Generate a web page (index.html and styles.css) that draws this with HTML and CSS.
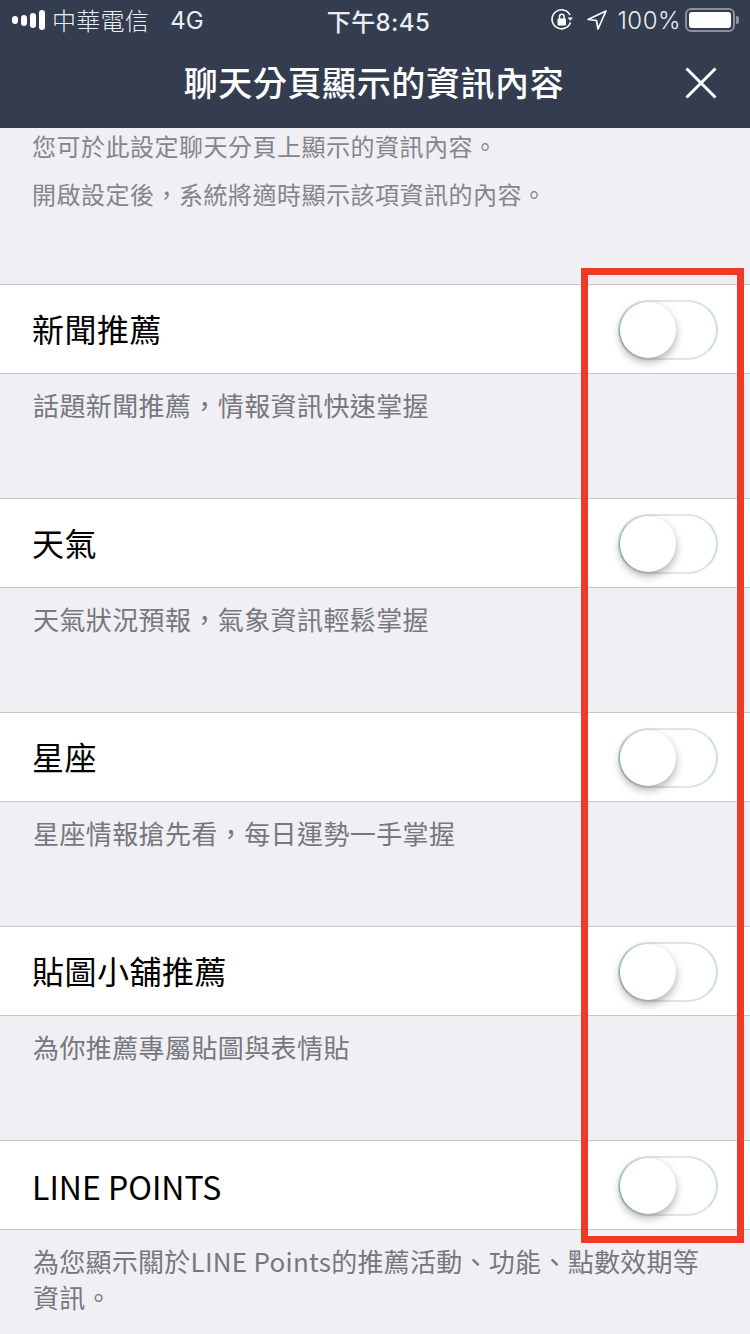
FILE: index.html
```html
<!DOCTYPE html>
<html lang="zh-Hant">
<head>
<meta charset="utf-8">
<title>聊天分頁顯示的資訊內容</title>
<link rel="stylesheet" href="styles.css">
</head>
<body>
<div class="page">
  <header class="top">
    <div class="status">
      <div class="status-left">
        <span class="signal"><i class="b1"></i><i class="b2"></i><i class="b3"></i><i class="b4"></i></span>
        <span class="carrier">中華電信</span>
        <span class="net">4G</span>
      </div>
      <div class="clock">下午8:45</div>
      <div class="status-right">
        <svg class="lock" width="24" height="24" viewBox="0 0 24 24" fill="none">
          <path d="M20.5 14.5A9.5 9.5 0 1 1 20 7" stroke="#fff" stroke-width="1.6"/>
          <path d="M17.5 9.5h5.5l-2.700 3.200z" fill="#fff"/>
          <rect x="7.500" y="10.500" width="8.500" height="7" rx="1" fill="#fff"/>
          <path d="M9.500 11V8.500a2.300 2.300 0 0 1 4.600 0V11" stroke="#fff" stroke-width="1.500"/>
        </svg>
        <svg class="loc" width="22" height="22" viewBox="0 0 22 22" fill="none">
          <path d="M20 2 2 10.500l8.500 1 1.500 8.500z" stroke="#fff" stroke-width="1.700" stroke-linejoin="round"/>
        </svg>
        <span class="pct">100%</span>
        <span class="battery"><span class="fill"></span></span>
        <span class="nub"></span>
      </div>
    </div>
    <div class="nav">
      <h1 class="title">聊天分頁顯示的資訊內容</h1>
      <svg class="close" width="32" height="32" viewBox="0 0 32 32" fill="none">
        <path d="M1.500 1.500 30.500 30.500M30.500 1.500 1.500 30.500" stroke="#fff" stroke-width="3"/>
      </svg>
    </div>
  </header>
  <main class="content">
    <div class="intro">
      <p>您可於此設定聊天分頁上顯示的資訊內容。</p>
      <p>開啟設定後，系統將適時顯示該項資訊的內容。</p>
    </div>
    <section class="item">
      <div class="row"><span class="label">新聞推薦</span><span class="toggle"><span class="knob"></span></span></div>
      <p class="desc">話題新聞推薦，情報資訊快速掌握</p>
    </section>
    <section class="item">
      <div class="row"><span class="label">天氣</span><span class="toggle"><span class="knob"></span></span></div>
      <p class="desc">天氣狀況預報，氣象資訊輕鬆掌握</p>
    </section>
    <section class="item">
      <div class="row"><span class="label">星座</span><span class="toggle"><span class="knob"></span></span></div>
      <p class="desc">星座情報搶先看，每日運勢一手掌握</p>
    </section>
    <section class="item">
      <div class="row"><span class="label">貼圖小舖推薦</span><span class="toggle"><span class="knob"></span></span></div>
      <p class="desc">為你推薦專屬貼圖與表情貼</p>
    </section>
    <section class="item">
      <div class="row"><span class="label latin">LINE POINTS</span><span class="toggle"><span class="knob"></span></span></div>
      <p class="desc desc-long">為您顯示關於LINE Points的推薦活動、功能、點數效期等資訊。</p>
    </section>
  </main>
  <div class="highlight"></div>
</div>
</body>
</html>
```
FILE: styles.css
```css
* { box-sizing: border-box; }
html, body { margin: 0; padding: 0; }
body { font-family: "Noto Sans CJK TC", "Noto Sans", sans-serif; background: #efeff4; }
.page { position: relative; width: 750px; height: 1334px; overflow: hidden; background: #efeff4; }

.top { height: 128px; background: #343c4f; color: #fff; }
.status { display: grid; grid-template-columns: 1fr auto 1fr; align-items: center; height: 40px; padding: 0 11px 0 12px; font-family: Inter, "Noto Sans CJK TC", sans-serif; font-size: 24px; color: #eceef1; }
.status-left { display: flex; align-items: center; }
.signal { display: flex; align-items: center; gap: 3px; margin-right: 7px; }
.signal i { display: block; width: 6px; background: #fff; border-radius: 3px; }
.b1 { height: 8px; }
.b2 { height: 11px; }
.b3 { height: 15px; }
.b4 { height: 20px; }
.carrier { font-family: "Noto Sans CJK TC", sans-serif; font-weight: 300; line-height: 40px; letter-spacing: 0.3px; }
.net { margin-left: 21px; }
.clock { margin-left: 6px; font-family: Inter, "Noto Sans CJK TC", sans-serif; font-weight: 500; letter-spacing: 0.4px; }
.status-right { display: flex; align-items: center; justify-content: flex-end; }
.lock { margin-right: 12px; }
.loc { margin-right: 9px; }
.pct { margin-right: 4px; font-weight: 300; letter-spacing: 0.5px; }
.battery { display: block; width: 50px; height: 24px; border: 2px solid #8b909c; border-radius: 6px; padding: 2px; }
.fill { display: block; height: 100%; background: #fff; border-radius: 3px; }
.nub { display: block; width: 3px; height: 8px; margin-left: 1px; background: #8b909c; border-radius: 0 2px 2px 0; }
.nav { position: relative; display: flex; align-items: center; justify-content: center; height: 88px; }
.title { margin: 0 2px 4px 0; font-size: 34px; font-weight: 500; line-height: 48px; letter-spacing: 0.6px; }
.close { position: absolute; right: 33px; top: 27px; }

.intro { height: 156px; }
.intro p { margin: 0 0 12px 32px; font-size: 24px; line-height: 36px; color: #85858c; letter-spacing: 0.5px; }
.item { height: 214px; }
.row { display: flex; align-items: center; justify-content: space-between; height: 90px; padding: 0 32px 0 32px; background: #fff; border-top: 1px solid #c8c7cc; border-bottom: 1px solid #c8c7cc; }
.label { font-size: 32px; line-height: 44px; font-weight: 400; color: #000; letter-spacing: 0.5px; }
.row .label { margin-bottom: 2px; }
.toggle { position: relative; display: block; width: 100px; height: 60px; margin-top: 2px; border-radius: 30px; border: 2px solid #e2e4e2; border-left-color: #c6e4d2; border-right-color: #c6e4d2; background: #fff; }
.knob { position: absolute; left: 0; top: 0; width: 56px; height: 56px; border-radius: 50%; background: #fff; box-shadow: 0 4px 9px rgba(0, 0, 0, 0.32), -1px 0 1px rgba(120, 170, 140, 0.45); }
.desc { margin: 13px 32px 0 33px; font-size: 26px; line-height: 36px; color: #77777e; letter-spacing: 0.4px; }
.desc-long { letter-spacing: 0.26px; }
.latin { letter-spacing: 0; }
.row .latin { margin-top: 2px; margin-bottom: 0; }

.highlight { position: absolute; left: 581px; top: 268px; width: 163px; height: 975px; border: 7px solid #ee3a26; }
```
